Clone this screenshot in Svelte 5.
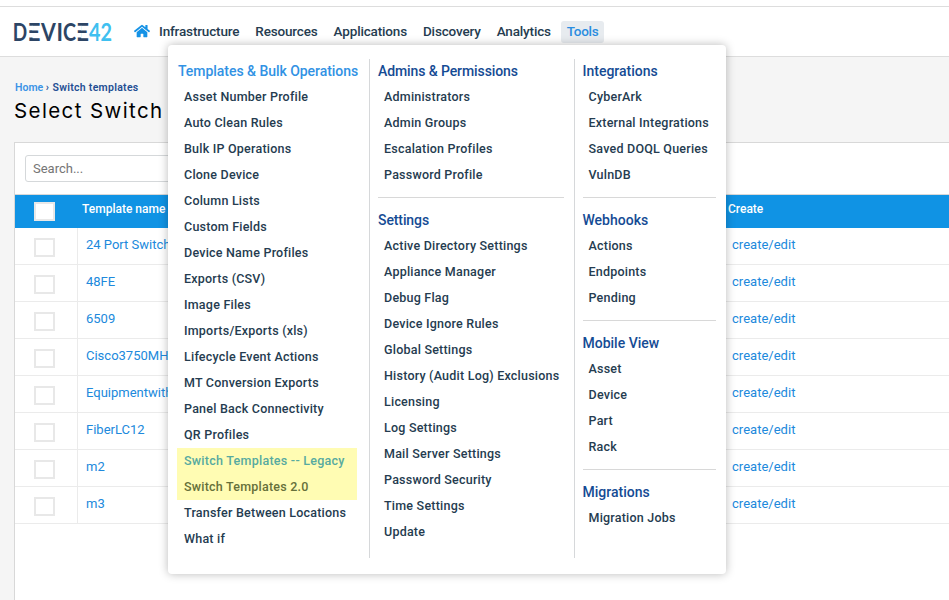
<script>
  const nav = ['Infrastructure', 'Resources', 'Applications', 'Discovery', 'Analytics', 'Tools'];
  const templates = ['24 Port Switch', '48FE', '6509', 'Cisco3750MH', 'Equipmentwith', 'FiberLC12', 'm2', 'm3'];
  const columns = [
    [
      {
        title: 'Templates & Bulk Operations',
        active: true,
        items: [
          'Asset Number Profile', 'Auto Clean Rules', 'Bulk IP Operations', 'Clone Device', 'Column Lists',
          'Custom Fields', 'Device Name Profiles', 'Exports (CSV)', 'Image Files', 'Imports/Exports (xls)',
          'Lifecycle Event Actions', 'MT Conversion Exports', 'Panel Back Connectivity', 'QR Profiles',
          'Switch Templates -- Legacy', 'Switch Templates 2.0', 'Transfer Between Locations', 'What if'
        ]
      }
    ],
    [
      { title: 'Admins & Permissions', items: ['Administrators', 'Admin Groups', 'Escalation Profiles', 'Password Profile'] },
      {
        title: 'Settings',
        items: [
          'Active Directory Settings', 'Appliance Manager', 'Debug Flag', 'Device Ignore Rules', 'Global Settings',
          'History (Audit Log) Exclusions', 'Licensing', 'Log Settings', 'Mail Server Settings',
          'Password Security', 'Time Settings', 'Update'
        ]
      }
    ],
    [
      { title: 'Integrations', items: ['CyberArk', 'External Integrations', 'Saved DOQL Queries', 'VulnDB'] },
      { title: 'Webhooks', items: ['Actions', 'Endpoints', 'Pending'] },
      { title: 'Mobile View', items: ['Asset', 'Device', 'Part', 'Rack'] },
      { title: 'Migrations', items: ['Migration Jobs'] }
    ]
  ];
</script>

<div class="page">
  <header>
    <svg class="logo" width="104" height="30" viewBox="-2 -5 104 30">
      <g fill="#2c4565">
        <text y="18.5" x="-1.2" textLength="14.4" lengthAdjust="spacingAndGlyphs">D</text>
        <text y="18.5" x="13.5" textLength="13" lengthAdjust="spacingAndGlyphs">E</text>
        <text y="18.5" x="27" textLength="14.8" lengthAdjust="spacingAndGlyphs">V</text>
        <text y="18.5" x="42.5" textLength="6.5" lengthAdjust="spacingAndGlyphs">I</text>
        <text y="18.5" x="49" textLength="13" lengthAdjust="spacingAndGlyphs">C</text>
        <text y="18.5" x="62" textLength="13" lengthAdjust="spacingAndGlyphs">E</text>
        <path d="M14 3.7h5v4.5h-5zM14 11h5v4.6h-5zM62.5 3.7h5v4.5h-5zM62.5 11h5v4.6h-5z" fill="#fff" />
      </g>
      <text y="18.5" x="75" textLength="23" lengthAdjust="spacingAndGlyphs" fill="#3fc0f0">42</text>
    </svg>
    <svg class="home" width="16" height="14" viewBox="0 0 576 512" preserveAspectRatio="none">
      <path fill="#1592e6" d="M280 148 96 300v164a16 16 0 0 0 16 16h112a16 16 0 0 0 16-16v-96a16 16 0 0 1 16-16h64a16 16 0 0 1 16 16v96a16 16 0 0 0 16 16h112a16 16 0 0 0 16-16V300L296 148a12 12 0 0 0-16 0zM572 251l-84-69V44a12 12 0 0 0-12-12h-56a12 12 0 0 0-12 12v72l-90-74a48 48 0 0 0-61 0L4 251a12 12 0 0 0-1 17l25 31a12 12 0 0 0 17 2L280 107a12 12 0 0 1 16 0l235 194a12 12 0 0 0 17-2l25-31a12 12 0 0 0-1-17z" />
    </svg>
    <nav>
      {#each nav as label}
        <span class="link" class:current={label === 'Tools'}>{label}</span>
      {/each}
    </nav>
  </header>

  <div class="crumbs"><span>Home</span> › <b>Switch templates</b></div>
  <h1>Select Switch</h1>

  <main>
    <div class="toolbar"><div class="search">Search...</div></div>
    <div class="row head">
      <div class="cell pick"><i></i></div>
      <div class="cell name">Template name</div>
      <div class="cell create">Create</div>
    </div>
    {#each templates as name}
      <div class="row">
        <div class="cell pick"><i></i></div>
        <div class="cell name">{name}</div>
        <div class="cell create">create/edit</div>
      </div>
    {/each}
  </main>

  <div class="menu">
    {#each columns as groups}
      <div class="col">
        {#each groups as g}
          <section>
            <h2 class:active={g.active}>{g.title}</h2>
            {#each g.items as item}
              <div class="item" class:legacy={item.endsWith('Legacy')} class:modern={item.endsWith('2.0')}>{item}</div>
            {/each}
          </section>
        {/each}
      </div>
    {/each}
  </div>
</div>

<style>
  .page { position: relative; box-sizing: border-box; width: 949px; height: 600px; overflow: hidden; background: #f5f5f5; border-top: 6px solid #fff; font-family: Roboto, "Liberation Sans", sans-serif; white-space: nowrap; }
  header { box-sizing: border-box; height: 51px; background: #fff; border-top: 1px solid #ddd; border-bottom: 1px solid #ddd; display: flex; align-items: center; padding-left: 12px; }
  .logo { font: 700 24.5px Lato, sans-serif; overflow: visible; }
  .home { margin-left: 17.5px; margin-top: -1px; }
  nav { display: flex; margin-left: 3.5px; gap: 4px; }
  .link { font-size: 13.5px; font-weight: 500; letter-spacing: -.16px; color: #253c50; line-height: 21px; padding: 0 6px 1px; border-radius: 3px; }
  .link.current { background: #e7ebef; color: #2a8de0; letter-spacing: -.3px; }
  .crumbs { margin: 24px 0 0 15px; font: 600 10.5px/14px Roboto, sans-serif; color: #1f4e93; }
  .crumbs span { color: #3b93e6; }
  .crumbs b { font-weight: 600; letter-spacing: .28px; margin-left: 1px; }
  h1 { margin: 1px 0 0 14px; font: 400 20.5px/29px Inter, sans-serif; letter-spacing: 1.4px; color: #000; }
  main { margin: 17px 0 0 14px; height: 460px; background: #fff; border: solid #d8d8d8; border-width: 1px 0 0 1px; }
  .toolbar { box-sizing: border-box; height: 52px; padding: 12px 0 0 10px; border-bottom: 1px solid #d8d8d8; }
  .search { box-sizing: border-box; width: 300px; height: 27px; border: 1px solid #d5d8da; border-radius: 3px; padding-left: 7px; font-size: 13px; line-height: 26px; color: #757575; }
  .row { box-sizing: border-box; display: flex; height: 37px; border-bottom: 1px solid #ebebeb; font-size: 13px; color: #2089dc; }
  .cell { box-sizing: border-box; line-height: 33px; }
  .pick { width: 63px; border-right: 1px solid #ebebeb; padding: 10px 0 0 19px; }
  .pick i { display: block; box-sizing: border-box; width: 21px; height: 19px; border: 2px solid #e8e8e8; background: #fff; }
  .name { width: 646px; padding-left: 8px; }
  .create { padding-left: 8px; letter-spacing: .02px; }
  .head { height: 33px; background: #1093e4; color: #fff; border: 0; font-size: 12px; }
  .head .pick { border-color: transparent; padding-top: 7px; }
  .head .cell { line-height: 28px; }
  .head .name, .head .create { padding-left: 4px; font-weight: 500; letter-spacing: 0; }
  .menu { position: absolute; left: 168px; top: 39px; box-sizing: border-box; width: 558px; height: 529px; padding: 14px 0 16px; display: flex; background: #fff; border-radius: 4px; box-shadow: 0 0 10px rgba(0, 0, 0, .28); }
  .col { box-sizing: border-box; width: 202px; padding: 0 10px 0 9px; border-right: 1px solid #d6d8da; }
  .col:nth-child(2) { width: 205px; padding-left: 8px; }
  .col:last-child { width: 151px; padding-left: 8px; border: 0; }
  section { margin-top: -1px; }
  section + section { margin-top: 9px; border-top: 1px solid #d8d8d8; padding-top: 9px; }
  h2 { margin: 0; font: 500 14px/26px Roboto, sans-serif; letter-spacing: -.1px; color: #154b94; }
  .col:last-child h2 { letter-spacing: 0; text-indent: -.5px; }
  h2.active { color: #3192e4; padding-left: 1px; letter-spacing: -.04px; }
  .item { font-size: 12.5px; font-weight: 500; line-height: 26px; height: 26px; padding-left: 6px; letter-spacing: .22px; color: #253c50; }
  .col:last-child .item { padding-left: 5.5px; }
  .col:first-child .item { padding-left: 7px; width: 173px; }
  .legacy, .modern { background: #fffcb3; }
  .col .legacy { color: #57aaa0; letter-spacing: .26px; }
  .modern { color: #66703a; }
</style>
